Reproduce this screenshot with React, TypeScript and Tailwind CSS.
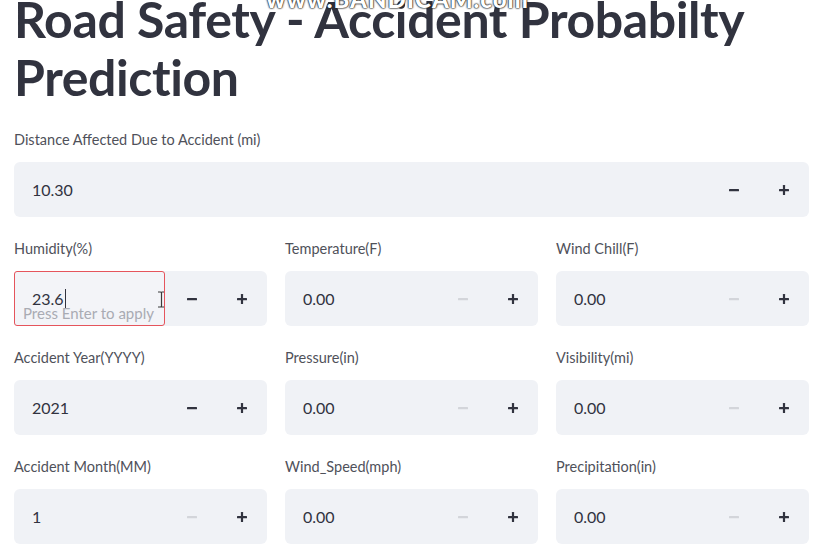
import React from 'react';

const font = { fontFamily: 'Lato, "Noto Sans", sans-serif' };

type Field = { label: string; value: string; minusOff?: boolean };

const Minus = ({ off }: { off?: boolean }) => (
  <svg width="10" height="10" viewBox="0 0 10 10">
    <rect x="0" y="4" width="10" height="2.2" rx="0.5" fill={off ? '#d3d5da' : '#31333f'} />
  </svg>
);

const Plus = () => (
  <svg width="10" height="10" viewBox="0 0 10 10">
    <rect x="0" y="4" width="10" height="2.2" rx="0.5" fill="#31333f" />
    <rect x="3.9" y="0" width="2.2" height="10" rx="0.5" fill="#31333f" />
  </svg>
);

const Buttons = ({ minusOff }: { minusOff?: boolean }) => (
  <div className="flex h-full">
    <div className="w-[50px] h-full flex items-center justify-center">
      <Minus off={minusOff} />
    </div>
    <div className="w-[50px] h-full flex items-center justify-center">
      <Plus />
    </div>
  </div>
);

const NumberField = ({ label, value, minusOff }: Field) => (
  <div>
    <div className="h-[22px] leading-[22px] text-[14.5px] text-[#4f515a] mb-[11px]">{label}</div>
    <div className="h-[55px] rounded-md bg-[#f0f2f6] flex items-center">
      <div className="flex-1 pl-[18px] text-[16px] text-[#31333f]">{value}</div>
      <Buttons minusOff={minusOff} />
    </div>
  </div>
);

const HumidityField = () => (
  <div>
    <div className="h-[22px] leading-[22px] text-[14.5px] text-[#4f515a] mb-[11px]">Humidity(%)</div>
    <div className="h-[55px] rounded-md bg-[#f0f2f6] flex items-center">
      <div className="relative w-[151px] h-full border border-[#e5545c] rounded-[3px] bg-[#f3f4f8] flex items-center pl-[17px] text-[16px] text-[#31333f]">
        <span>23.6</span>
        <span className="inline-block w-px h-[19px] bg-[#31333f] ml-[1px]" />
        <span className="absolute left-[8px] bottom-[1px] text-[15px] text-[#a9abb3]">Press Enter to apply</span>
        <svg className="absolute left-[142px] top-[19px]" width="8" height="17" viewBox="0 0 8 17">
          <path d="M1 1h2.5a1 1 0 0 1 1 1v13a1 1 0 0 1-1 1H1M7 1H4.5M7 16H4.5" stroke="#3a3a3a" strokeWidth="1.2" fill="none" />
        </svg>
      </div>
      <div className="flex-1" />
      <Buttons />
    </div>
  </div>
);

const grid: Field[] = [
  { label: 'Temperature(F)', value: '0.00', minusOff: true },
  { label: 'Wind Chill(F)', value: '0.00', minusOff: true },
  { label: 'Accident Year(YYYY)', value: '2021' },
  { label: 'Pressure(in)', value: '0.00', minusOff: true },
  { label: 'Visibility(mi)', value: '0.00', minusOff: true },
  { label: 'Accident Month(MM)', value: '1', minusOff: true },
  { label: 'Wind_Speed(mph)', value: '0.00', minusOff: true },
  { label: 'Precipitation(in)', value: '0.00', minusOff: true },
];

export default function App() {
  return (
    <div className="relative w-[823px] h-[556px] overflow-hidden bg-white px-[14px]" style={font}>
      <h1 className="-mt-[10px] text-[50px] leading-[58px] font-bold text-[#31333f] tracking-[-0.4px]">
        Road Safety - Accident Probabilty Prediction
      </h1>
      <div className="mt-[23px]">
        <NumberField label="Distance Affected Due to Accident (mi)" value="10.30" />
      </div>
      <div className="mt-[21px] grid grid-cols-3 gap-x-[18px] gap-y-[21px]">
        <HumidityField />
        {grid.map((f) => (
          <NumberField key={f.label} {...f} />
        ))}
      </div>
      <div className="absolute left-[266px] -top-[19px] text-[24px] font-black tracking-[1px] text-white [text-shadow:0_0_2px_#222,0_0_2px_#222,0_0_1px_#222]">
        www.BANDICAM.com
      </div>
    </div>
  );
}
